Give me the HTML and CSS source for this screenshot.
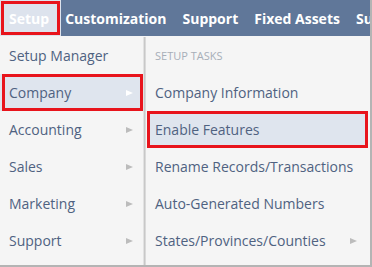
FILE: index.html
```html
<!DOCTYPE html>
<html lang="en">
<head>
    <meta charset="UTF-8">
    <meta name="viewport" content="width=device-width, initial-scale=1.0">
    <title>Setup Menu</title>
    <link rel="stylesheet" href="styles.css">
</head>
<body>
    <div class="frame">
        <div class="nav">
            <div class="nav-item active marked">Setup</div>
            <div class="nav-item">Customization</div>
            <div class="nav-item">Support</div>
            <div class="nav-item">Fixed Assets</div>
            <div class="nav-item">Su</div>
        </div>
        <div class="menus">
            <ul class="menu main-menu">
                <li>Setup Manager</li>
                <li class="active marked">Company <span class="arrow"></span></li>
                <li>Accounting <span class="arrow"></span></li>
                <li>Sales <span class="arrow"></span></li>
                <li>Marketing <span class="arrow"></span></li>
                <li>Support <span class="arrow"></span></li>
            </ul>
            <ul class="menu sub-menu">
                <li class="heading">Setup Tasks</li>
                <li>Company Information</li>
                <li class="active marked">Enable Features</li>
                <li>Rename Records/Transactions</li>
                <li>Auto-Generated Numbers</li>
                <li>States/Provinces/Counties <span class="arrow"></span></li>
            </ul>
        </div>
    </div>
</body>
</html>
```
FILE: styles.css
```css
body { margin: 0; font-family: "Open Sans", "Liberation Sans", sans-serif; background: #f5f5f5; }
.frame { width: 370px; height: 265px; border-right: 2px solid #b4b4b4; border-bottom: 2px solid #b4b4b4; background: #f5f5f5; overflow: hidden; }
.nav { display: flex; height: 36px; background: #607799; white-space: nowrap; }
.nav-item { display: flex; align-items: center; padding: 0 8px; color: #fff; font-weight: bold; font-size: 14px; }
.nav-item.active { background: #dde3ed; padding: 0 12px 0 9px; margin-right: -4px; }
.marked { outline: 3px solid #e8141c; outline-offset: -4px; }
.menus { display: flex; height: 229px; padding-top: 1px; }
.menu { list-style: none; margin: 0; padding: 0; }
.menu li { display: flex; align-items: center; height: 37px; padding: 0 9px; font-size: 14px; color: #4f6281; white-space: nowrap; }
.main-menu { width: 144px; flex-shrink: 0; box-sizing: border-box; border-right: 1px solid #e2e2e2; box-shadow: 1px 0 0 #c8c8c8, 2px 0 0 #dadada; }
.main-menu li { justify-content: space-between; padding: 0 10px 0 9px; }
.main-menu li:first-child { justify-content: flex-start; }
.main-menu li.marked { outline-offset: -3px; margin-left: 2px; padding-left: 7px; box-shadow: -2px 0 0 #dfe5ee; }
.sub-menu { flex: 1; margin-left: 3px; }
.sub-menu li { padding-left: 8px; }
.sub-menu li.heading { font-size: 11px; text-transform: uppercase; color: #a7aeb8; }
.sub-menu li.marked { outline-offset: -3px; margin-right: 2px; }
.sub-menu li:last-child { justify-content: space-between; padding-right: 13px; }
.menu li.active { background: #dfe5ee; }
.arrow { width: 0; height: 0; border-top: 3.5px solid transparent; border-bottom: 3.5px solid transparent; border-left: 7px solid #bcbcbc; }
.active .arrow { border-left-color: #fff; }
```
